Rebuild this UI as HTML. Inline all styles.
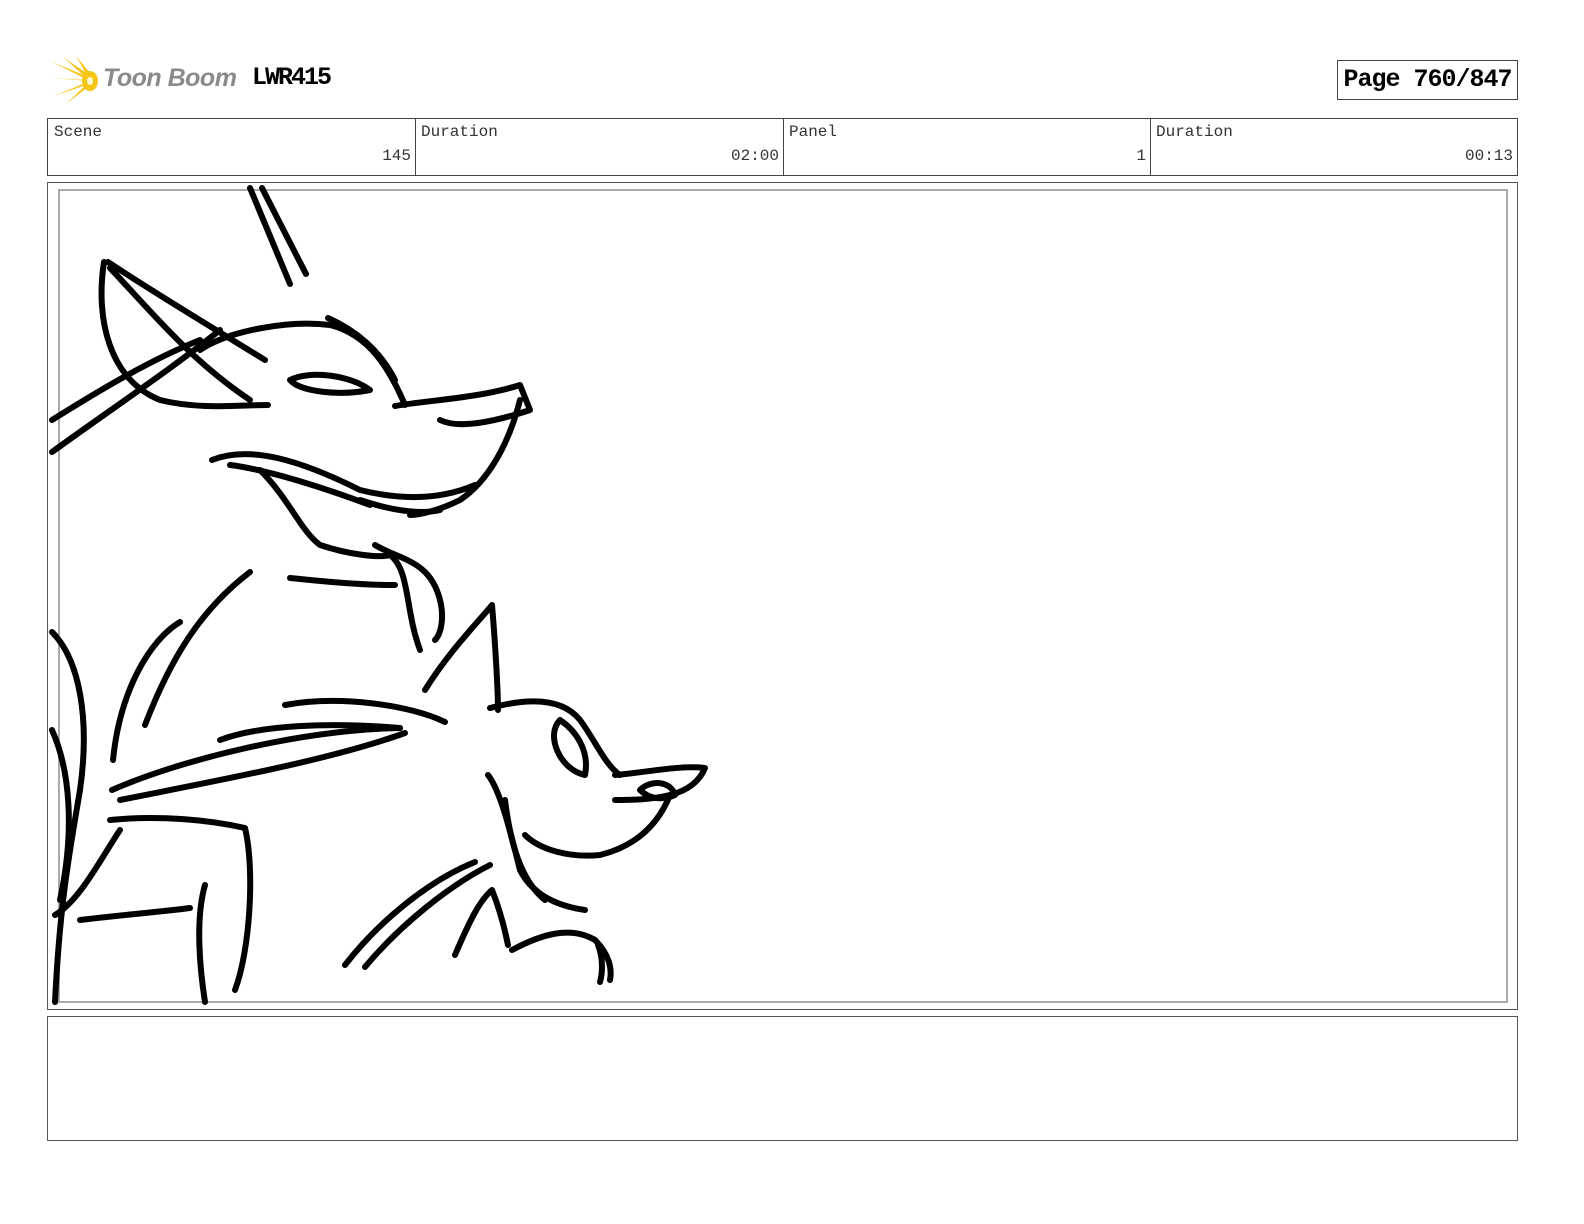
<!DOCTYPE html>
<html><head><meta charset="utf-8"><style>
body{margin:0;width:1584px;height:1224px;background:#fff;position:relative;overflow:hidden;font-family:"Liberation Mono",monospace}
.abs{position:absolute}
.cell{position:absolute;top:118px;height:58px;border:1px solid #444;box-sizing:border-box;font-size:16px;color:#333}
.cell .l{position:absolute;left:6px;top:4px}
.cell .v{position:absolute;right:4px;top:28px}
</style></head><body>
<svg class="abs" style="left:50px;top:56px" width="60" height="50" viewBox="0 0 60 50">
<g fill="#f5c518">
<polygon points="40,25 2,6 36,20"/><polygon points="40,25 14,2 38,18"/><polygon points="40,25 26,0 40,17"/>
<polygon points="40,25 0,22 36,24"/><polygon points="40,25 4,40 36,29"/><polygon points="40,25 16,48 38,31"/>
<ellipse cx="40" cy="25" rx="8" ry="10"/></g><ellipse cx="40" cy="25" rx="3" ry="4" fill="#fff8d0"/></svg>
<div class="abs" style="left:103px;top:64px;font:italic bold 25px 'Liberation Sans',sans-serif;color:#8a8a8a;letter-spacing:-0.5px">Toon Boom</div>
<div class="abs" style="left:252px;top:63px;font:bold 25px 'Liberation Mono',monospace;letter-spacing:-2px">LWR415</div>
<div class="abs" style="left:1337px;top:60px;width:181px;height:40px;border:1px solid #444;box-sizing:border-box;font:bold 25px 'Liberation Mono',monospace;text-align:center;line-height:38px;letter-spacing:-1px">Page 760/847</div>
<div class="cell" style="left:47px;width:369px"><span class="l">Scene</span><span class="v">145</span></div>
<div class="cell" style="left:415px;width:369px;border-left:none"><span class="l">Duration</span><span class="v">02:00</span></div>
<div class="cell" style="left:783px;width:368px;border-left:none"><span class="l">Panel</span><span class="v">1</span></div>
<div class="cell" style="left:1150px;width:368px;border-left:none"><span class="l">Duration</span><span class="v">00:13</span></div>
<div class="abs" style="left:47px;top:182px;width:1471px;height:828px;border:1px solid #555;box-sizing:border-box"></div>
<div class="abs" style="left:58px;top:189px;width:1450px;height:814px;border:2px solid #aaa;box-sizing:border-box"></div>
<div class="abs" style="left:47px;top:1016px;width:1471px;height:125px;border:1px solid #555;box-sizing:border-box"></div>
<svg class="abs" style="left:0;top:0" width="1584" height="1224" fill="none" stroke="#000" stroke-width="6" stroke-linecap="round" stroke-linejoin="round">
<path d="M250,188 L290,284 M262,188 L306,274"/>
<path d="M104,262 C95,320 110,380 160,400 C200,410 240,405 268,405"/>
<path d="M108,262 C150,290 200,320 265,360"/>
<path d="M110,268 C150,310 190,360 250,400"/>
<path d="M52,420 C100,390 150,360 200,340 M52,452 C110,410 170,370 220,330"/>
<path d="M200,350 C230,330 290,320 330,325 C370,335 390,370 405,405"/>
<path d="M328,318 C355,330 380,350 395,380"/>
<path d="M290,380 C310,370 350,375 370,390 C340,396 300,392 290,380 Z"/>
<path d="M395,406 C430,400 480,398 520,385 L530,410 C500,420 460,430 440,420"/>
<path d="M520,400 C510,440 490,480 460,500 C440,510 420,515 410,515"/>
<path d="M212,460 C250,445 300,460 360,490 C400,500 440,500 475,485"/>
<path d="M230,465 C270,470 330,490 370,505 M360,500 C390,510 420,515 440,510"/>
<path d="M260,470 C290,500 300,530 320,545 C350,555 380,558 390,555 C410,570 405,610 420,650"/>
<path d="M375,545 C400,560 430,560 440,600 C445,620 440,635 435,640"/>
<path d="M290,578 C330,582 360,585 395,585"/>
<path d="M250,572 C200,610 170,660 145,725"/>
<path d="M180,622 C150,640 120,690 113,760"/>
<path d="M52,632 C80,660 90,720 80,790 C70,850 60,900 55,1002"/>
<path d="M52,730 C70,770 75,830 60,900"/>
<path d="M425,690 C450,650 480,620 492,605 C495,640 498,690 498,710"/>
<path d="M285,705 C340,695 410,705 445,722"/>
<path d="M220,740 C260,725 330,722 400,728"/>
<path d="M112,790 C180,760 300,730 400,728"/>
<path d="M120,800 C220,780 330,760 405,733"/>
<path d="M490,708 C520,700 560,695 580,720 C595,740 605,765 620,775"/>
<path d="M560,720 C545,735 560,770 585,775 C590,750 575,730 560,720 Z"/>
<path d="M615,775 C650,772 680,765 705,768 C700,780 690,790 670,795 C650,800 630,800 615,800"/>
<path d="M640,790 C650,780 670,780 675,795 C665,800 650,800 640,790 Z"/>
<path d="M670,795 C660,820 640,845 600,855 C570,858 540,850 525,835"/>
<path d="M488,775 C500,790 510,830 520,870 C530,890 550,905 585,910"/>
<path d="M505,800 C510,840 520,880 545,900"/>
<path d="M110,820 C160,815 210,820 245,828 C255,870 250,950 235,990"/>
<path d="M120,830 C100,860 80,900 55,915"/>
<path d="M80,920 C120,915 160,912 190,908"/>
<path d="M205,885 C195,920 200,970 205,1002"/>
<path d="M345,965 C380,920 430,880 475,862 M365,967 C400,925 450,885 490,865"/>
<path d="M455,955 C470,920 480,900 492,890 C500,910 505,930 508,945"/>
<path d="M512,950 C540,935 570,925 595,940 C610,955 612,970 610,980"/>
<path d="M598,945 C604,960 602,975 600,982"/>
</svg>
</body></html>
